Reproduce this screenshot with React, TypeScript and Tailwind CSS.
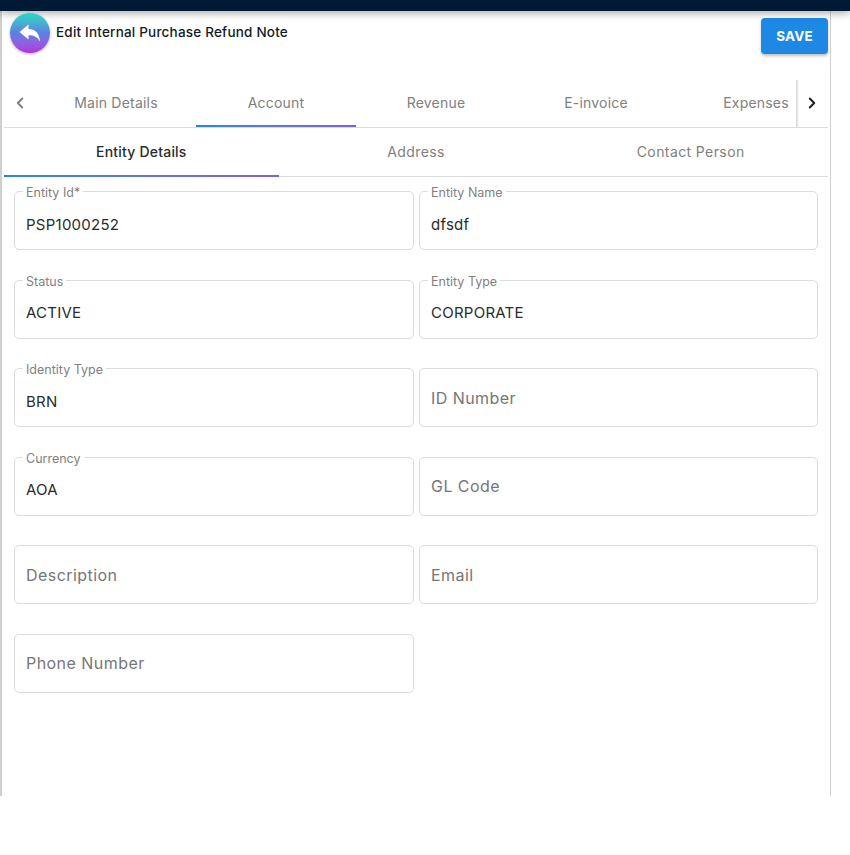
import { ChevronLeft, ChevronRight } from "lucide-react"

const mainTabs = ["Main Details", "Account", "Revenue", "E-invoice", "Expenses"]
const subTabs = ["Entity Details", "Address", "Contact Person"]

const fields = [
  { label: "Entity Id*", value: "PSP1000252" },
  { label: "Entity Name", value: "dfsdf" },
  { label: "Status", value: "ACTIVE" },
  { label: "Entity Type", value: "CORPORATE" },
  { label: "Identity Type", value: "BRN" },
  { label: "ID Number", value: "" },
  { label: "Currency", value: "AOA" },
  { label: "GL Code", value: "" },
  { label: "Description", value: "" },
  { label: "Email", value: "" },
  { label: "Phone Number", value: "" },
]

const Field = ({ label, value }: { label: string; value: string }) => {
  if (!value) {
    return (
      <div className="h-[59px] rounded-[5px] border border-[#dcdcdc] flex items-center px-[11px]">
        <p className="text-[16px] tracking-[0.45px] text-[#767676]">{label}</p>
      </div>
    )
  }
  return (
    <div className="relative h-[59px] rounded-[5px] border border-[#dcdcdc] flex items-center px-[11px] pt-[9px]">
      <span className="absolute left-[8px] top-[-7px] bg-white px-[3px] text-[12.5px] leading-[16px] text-[#7f7f7f]">{label}</span>
      <p className="text-[15px] tracking-[0.25px] text-[#2b2b2b]">{value}</p>
    </div>
  )
}

const App = () => {
  return (
    <div className="w-[850px] h-[855px] bg-white relative overflow-hidden font-['Inter',sans-serif]">
      <div className="h-[11px] bg-[#001a35] shadow-[0_2px_8px_rgba(0,0,0,0.35)] relative" />
      <div className="w-[831px] h-[785px] border-l-2 border-r border-[#cfcfcf] flex flex-col">
        <div className="h-[70px] flex justify-between pl-[8px] pr-[2px]">
          <div className="flex items-start">
            <button className="relative mt-[2px] w-[40px] h-[40px] rounded-full bg-linear-to-b from-[#12dcc0] via-[#5a7fe0] to-[#b02ee0] shadow-[0_1px_3px_rgba(0,0,0,0.3)] flex items-center justify-center">
              <svg width="22" height="18" viewBox="0 0 22 18" fill="white">
                <path d="M0.5 8 L9.5 0.5 V5 C16 5 20.5 9 21 17.5 C18.5 13 15 11.3 9.5 11.3 V15.5 Z" />
              </svg>
            </button>
            <p className="ml-[6px] mt-[12px] text-[13.5px] leading-[18px] font-medium tracking-[0.2px] text-[#141a24]">Edit Internal Purchase Refund Note</p>
          </div>
          <button className="mt-[7px] w-[67px] h-[36px] rounded-[4px] bg-[#1e88e5] shadow-[0_2px_3px_rgba(0,0,0,0.25)] text-white text-[13.5px] font-bold tracking-[0.2px]">SAVE</button>
        </div>

        <div className="relative ml-[2px] mr-[2px] h-[47px] flex border-b border-[#dcdcdc]">
          <div className="w-[32px] flex items-center justify-center pb-[2px] text-[#808080]">
            <ChevronLeft size={18} strokeWidth={2.5} />
          </div>
          <div className="w-[760px] overflow-hidden flex">
            {mainTabs.map((t, i) => (
              <div key={t} className="relative shrink-0 w-[160px] flex items-center justify-center pb-[4px] text-[14px] tracking-[0.2px] text-[#808080]">
                {t}
                {i === 1 && <div className="absolute left-0 right-0 bottom-0 h-[2px] bg-linear-to-r from-[#1e88e5] to-[#7d5fe8]" />}
              </div>
            ))}
          </div>
          <div className="relative w-[32px] flex items-center justify-center pb-[2px] text-[#1a1a1a] bg-white">
            <div className="absolute left-0 top-[-1px] bottom-0 w-[3px] bg-linear-to-r from-[#d4d4d4] to-white" />
            <ChevronRight size={18} strokeWidth={2.5} />
          </div>
        </div>

        <div className="ml-[2px] mr-[2px] h-[49px] flex border-b border-[#dcdcdc]">
          {subTabs.map((t, i) => (
            <div key={t} className={`relative w-[275px] flex items-center justify-center pb-[2px] text-[14px] ${i === 0 ? "font-medium tracking-[0.2px] text-[#2b2b2b]" : "tracking-[0.4px] text-[#808080]"}`}>
              {t}
              {i === 0 && <div className="absolute left-0 right-0 bottom-[-1px] h-[2px] bg-linear-to-r from-[#1e88e5] to-[#7d5fe8]" />}
            </div>
          ))}
        </div>

        <div className="mt-[14px] ml-[12px] grid grid-cols-[400px_399px] gap-x-[5px] gap-y-[29.5px]">
          {fields.map((f) => (
            <Field key={f.label} label={f.label} value={f.value} />
          ))}
        </div>
      </div>
    </div>
  )
}

export default App
